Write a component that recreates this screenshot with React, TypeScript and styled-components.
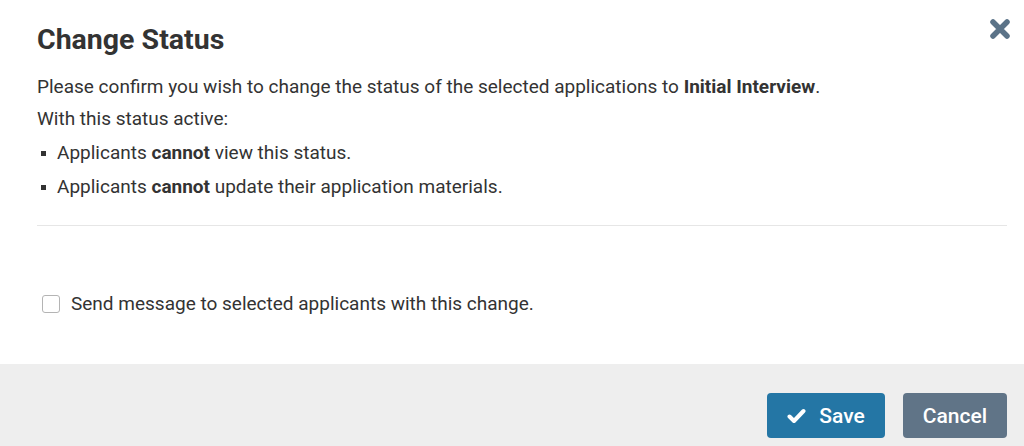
import React from "react";
import styled, { createGlobalStyle } from "styled-components";

const GlobalStyle = createGlobalStyle`
  html, body {
    margin: 0;
    padding: 0;
    background: #ffffff;
  }
  body {
    font-family: Roboto, "Liberation Sans", Arial, sans-serif;
    color: #333333;
  }
`;

const Modal = styled.div`
  width: 1024px;
  height: 446px;
  display: flex;
  flex-direction: column;
  background: #ffffff;
  overflow: hidden;
`;

const Body = styled.div`
  position: relative;
  flex: 1;
  padding: 22px 17px 0 37px;
`;

const Title = styled.h2`
  margin: 0 0 16px;
  font-size: 28.5px;
  line-height: 36px;
  font-weight: 700;
  color: #333333;
`;

const CloseButton = styled.button`
  position: absolute;
  top: 17px;
  right: 12px;
  width: 24px;
  height: 24px;
  padding: 0;
  border: none;
  background: transparent;
  cursor: pointer;
  display: flex;
  align-items: center;
  justify-content: center;
`;

const Text = styled.p`
  margin: 0 0 6px;
  font-size: 19px;
  line-height: 26px;
`;

const List = styled.ul`
  margin: 0;
  padding: 0 0 0 4px;
  list-style: none;
`;

const Item = styled.li`
  display: flex;
  align-items: center;
  gap: 11px;
  margin-top: 8px;
  font-size: 19px;
  line-height: 26px;
  &::before {
    content: "";
    width: 5px;
    height: 5px;
    background: #333333;
    flex: none;
  }
`;

const Divider = styled.hr`
  margin: 25px 0 0;
  border: none;
  border-top: 1px solid #e6e6e6;
`;

const CheckRow = styled.label`
  display: flex;
  align-items: center;
  gap: 11px;
  margin: 65px 0 0 5px;
  font-size: 19px;
  line-height: 26px;
  cursor: pointer;
`;

const Box = styled.span`
  width: 16px;
  height: 16px;
  border: 1.5px solid #b4b4b4;
  border-radius: 3px;
  background: #ffffff;
  flex: none;
`;

const Footer = styled.div`
  height: 82px;
  box-sizing: border-box;
  background: #eeeeee;
  display: flex;
  justify-content: flex-end;
  align-items: flex-start;
  gap: 18px;
  padding: 29px 17px 0 0;
`;

const Button = styled.button<{ $variant: "primary" | "secondary" }>`
  height: 45px;
  padding: 0 19px;
  min-width: ${(p) => (p.$variant === "primary" ? "118px" : "104px")};
  border: none;
  border-radius: 4px;
  background: ${(p) => (p.$variant === "primary" ? "#2476a5" : "#607487")};
  color: #ffffff;
  font-family: Roboto, "Liberation Sans", Arial, sans-serif;
  font-size: 21px;
  font-weight: 500;
  display: flex;
  align-items: center;
  justify-content: center;
  gap: 13px;
  cursor: pointer;
`;

export default function App() {
  return (
    <>
      <GlobalStyle />
      <Modal>
        <Body>
          <Title>Change Status</Title>
          <CloseButton aria-label="Close">
            <svg width="22" height="22" viewBox="0 0 22 22">
              <path
                d="M4 4 L18 18 M18 4 L4 18"
                stroke="#5b7388"
                strokeWidth="5.5"
                strokeLinecap="round"
              />
            </svg>
          </CloseButton>
          <Text>
            Please confirm you wish to change the status of the selected applications to{" "}
            <strong>Initial Interview</strong>.
          </Text>
          <Text>With this status active:</Text>
          <List>
            <Item>
              <span>
                Applicants <strong>cannot</strong> view this status.
              </span>
            </Item>
            <Item>
              <span>
                Applicants <strong>cannot</strong> update their application materials.
              </span>
            </Item>
          </List>
          <Divider />
          <CheckRow>
            <Box />
            Send message to selected applicants with this change.
          </CheckRow>
        </Body>
        <Footer>
          <Button $variant="primary">
            <svg width="19" height="16" viewBox="0 0 19 16">
              <path
                d="M2.5 8.5 L7 13 L16.5 3"
                stroke="#ffffff"
                strokeWidth="4"
                fill="none"
                strokeLinecap="round"
                strokeLinejoin="round"
              />
            </svg>
            Save
          </Button>
          <Button $variant="secondary">Cancel</Button>
        </Footer>
      </Modal>
    </>
  );
}
